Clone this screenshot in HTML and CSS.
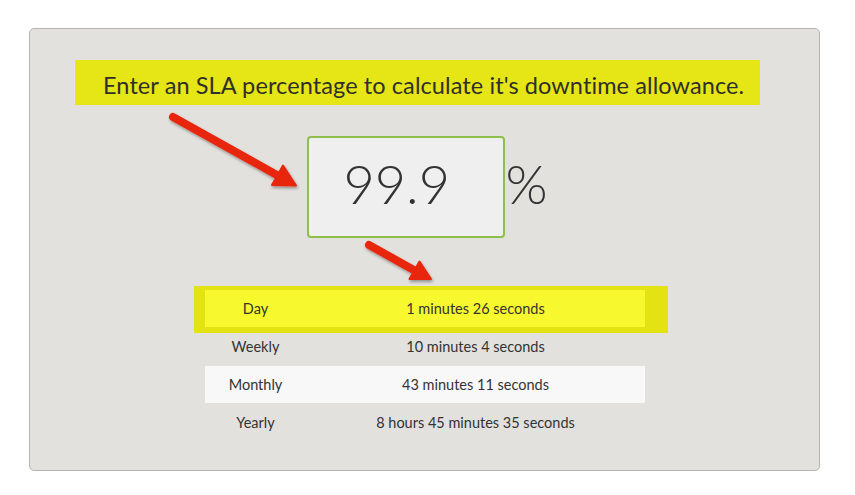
FILE: index.html
```html
<!DOCTYPE html>
<html>
<head>
<meta charset="utf-8">
<link rel="stylesheet" href="styles.css">
</head>
<body>
<div class="panel">
  <div class="banner">Enter an SLA percentage to calculate it's downtime allowance.</div>
  <div class="entry">
    <input class="sla-input" type="text" value="99.9">
    <span class="percent">%</span>
  </div>
  <div class="results">
    <div class="day-wrap">
      <div class="row row-day">
        <div class="label">Day</div>
        <div class="value">1 minutes 26 seconds</div>
      </div>
    </div>
    <div class="row">
      <div class="label">Weekly</div>
      <div class="value">10 minutes 4 seconds</div>
    </div>
    <div class="row row-alt">
      <div class="label">Monthly</div>
      <div class="value">43 minutes 11 seconds</div>
    </div>
    <div class="row">
      <div class="label">Yearly</div>
      <div class="value">8 hours 45 minutes 35 seconds</div>
    </div>
  </div>
</div>
<svg class="arrows" width="855" height="495" viewBox="0 0 855 495">
  <defs>
    <filter id="sh" x="-20%" y="-20%" width="140%" height="160%">
      <feDropShadow dx="1" dy="2" stdDeviation="1.4" flood-color="#000" flood-opacity="0.35"/>
    </filter>
  </defs>
  <g filter="url(#sh)">
    <line x1="173" y1="117" x2="280" y2="176.7" stroke="#e8260e" stroke-width="8" stroke-linecap="round"/>
    <polygon points="296,185.5 272,185 283,165.5" fill="#e8260e" stroke="#e8260e" stroke-width="2" stroke-linejoin="round"/>
    <line x1="369" y1="245" x2="416" y2="271.2" stroke="#e8260e" stroke-width="8" stroke-linecap="round"/>
    <polygon points="431,279 409.5,279 419.5,261.5" fill="#e8260e" stroke="#e8260e" stroke-width="2" stroke-linejoin="round"/>
  </g>
</svg>
</body>
</html>
```

FILE: styles.css
```css
html, body {
  margin: 0;
  padding: 0;
  background: #ffffff;
}
body {
  position: relative;
  width: 855px;
  height: 495px;
  overflow: hidden;
  font-family: "Lato", "Liberation Sans", sans-serif;
  color: #333333;
}
.panel {
  box-sizing: border-box;
  margin: 28px 0 0 29px;
  width: 791px;
  height: 443px;
  border: 1px solid #b4b4b2;
  border-radius: 5px;
  background: #e2e1dd;
  padding-top: 31px;
  display: flex;
  flex-direction: column;
  align-items: center;
}
.banner {
  box-sizing: border-box;
  width: 685px;
  height: 45px;
  align-self: flex-start;
  margin-left: 45px;
  background: #e6e515;
  font-size: 23.5px;
  letter-spacing: 0.1px;
  line-height: 50px;
  padding-left: 28px;
  color: #2f2f2a;
  white-space: nowrap;
}
.entry {
  margin-top: 31px;
  margin-left: 6px;
  display: flex;
  align-items: center;
  gap: 0;
}
.sla-input {
  box-sizing: border-box;
  width: 198px;
  height: 102px;
  border: 2px solid #8dbf4a;
  border-radius: 4px;
  background: #efefef;
  font-family: "Lato", "Liberation Sans", sans-serif;
  font-weight: 300;
  font-size: 54px;
  color: #333333;
  padding: 0 0 8px 34px;
  outline: none;
  margin: 0;
}
.percent {
  font-size: 54px;
  font-weight: 300;
  color: #333333;
  line-height: 1;
  padding-bottom: 6px;
}
.results {
  margin-top: 52px;
  width: 440px;
  display: flex;
  flex-direction: column;
}
.day-wrap {
  background: #e3e213;
  margin: -4px -23px 0 -11px;
  padding: 4px 23px 6px 11px;
}
.row {
  display: grid;
  grid-template-columns: 102px 338px;
  height: 38px;
  align-items: center;
  font-size: 14.5px;
  color: #333333;
}
.row-day {
  background: #f8f82e;
  height: 37px;
}
.day-wrap + .row {
  margin-top: -7px;
  height: 40px;
}
.row-alt {
  background: #f8f8f8;
  height: 37px;
}
.label, .value {
  text-align: center;
}
.arrows {
  position: absolute;
  left: 0;
  top: 0;
  pointer-events: none;
}
```
